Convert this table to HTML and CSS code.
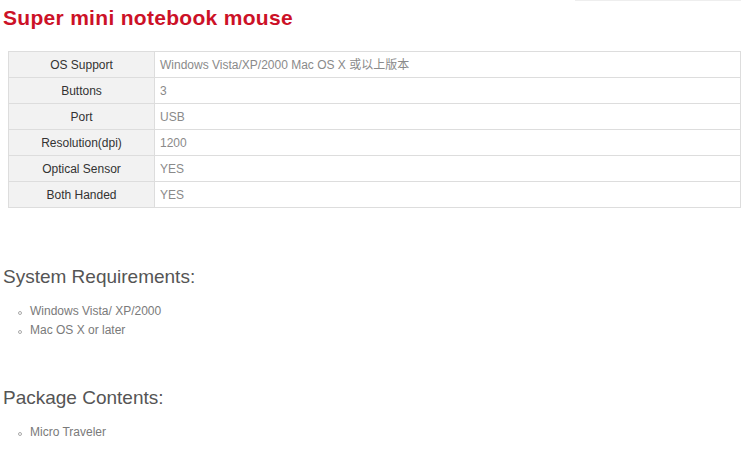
FILE: index.html
```html
<!DOCTYPE html>
<html>
<head>
<meta charset="utf-8">
<link rel="stylesheet" href="styles.css">
</head>
<body>
<div class="topline"></div>
<h1 class="title">Super mini notebook mouse</h1>
<table class="spec">
  <tr><td class="label">OS Support</td><td class="value">Windows Vista/XP/2000 Mac OS X 或以上版本</td></tr>
  <tr><td class="label">Buttons</td><td class="value">3</td></tr>
  <tr><td class="label">Port</td><td class="value">USB</td></tr>
  <tr><td class="label">Resolution(dpi)</td><td class="value">1200</td></tr>
  <tr><td class="label">Optical Sensor</td><td class="value">YES</td></tr>
  <tr><td class="label">Both Handed</td><td class="value">YES</td></tr>
</table>
<h2 class="section first">System Requirements:</h2>
<ul class="items">
  <li>Windows Vista/ XP/2000</li>
  <li>Mac OS X or later</li>
</ul>
<h2 class="section">Package Contents:</h2>
<ul class="items">
  <li>Micro Traveler</li>
</ul>
</body>
</html>
```
FILE: styles.css
```css
html, body {
  margin: 0;
  padding: 0;
  background: #fff;
}
body {
  font-family: "Liberation Sans", Arial, "Noto Sans CJK SC", sans-serif;
  width: 744px;
  overflow: hidden;
}
.topline {
  margin-left: 575px;
  width: 166px;
  height: 0;
  border-top: 1px solid #eeeeee;
}
.title {
  margin: 5px 0 0 3px;
  font-size: 21px;
  line-height: 24px;
  letter-spacing: 0.3px;
  font-weight: bold;
  color: #cc1127;
}
.spec {
  margin: 21px 0 0 8px;
  width: 733px;
  border-collapse: collapse;
  font-size: 12px;
}
.spec td {
  height: 25px;
  padding: 0 5px;
  border: 1px solid #dddddd;
  line-height: 14px;
}
.spec .label {
  width: 135px;
  background: #f2f2f2;
  color: #333333;
  text-align: center;
}
.spec .value {
  color: #8a8a8a;
  text-align: left;
}
.section {
  margin: 47px 0 0 3px;
  font-size: 19px;
  line-height: 22px;
  font-weight: normal;
  color: #555555;
}
.section.first {
  margin-top: 58px;
}
.items {
  list-style: none;
  margin: 14px 0 0 0;
  padding: 0 0 0 30px;
  font-size: 12px;
  line-height: 19px;
  color: #7a7a7a;
}
.items li {
  position: relative;
}
.items li::before {
  content: "";
  position: absolute;
  left: -12px;
  top: 9px;
  width: 2px;
  height: 2px;
  border: 1px solid #aaaaaa;
  border-radius: 50%;
}
```
